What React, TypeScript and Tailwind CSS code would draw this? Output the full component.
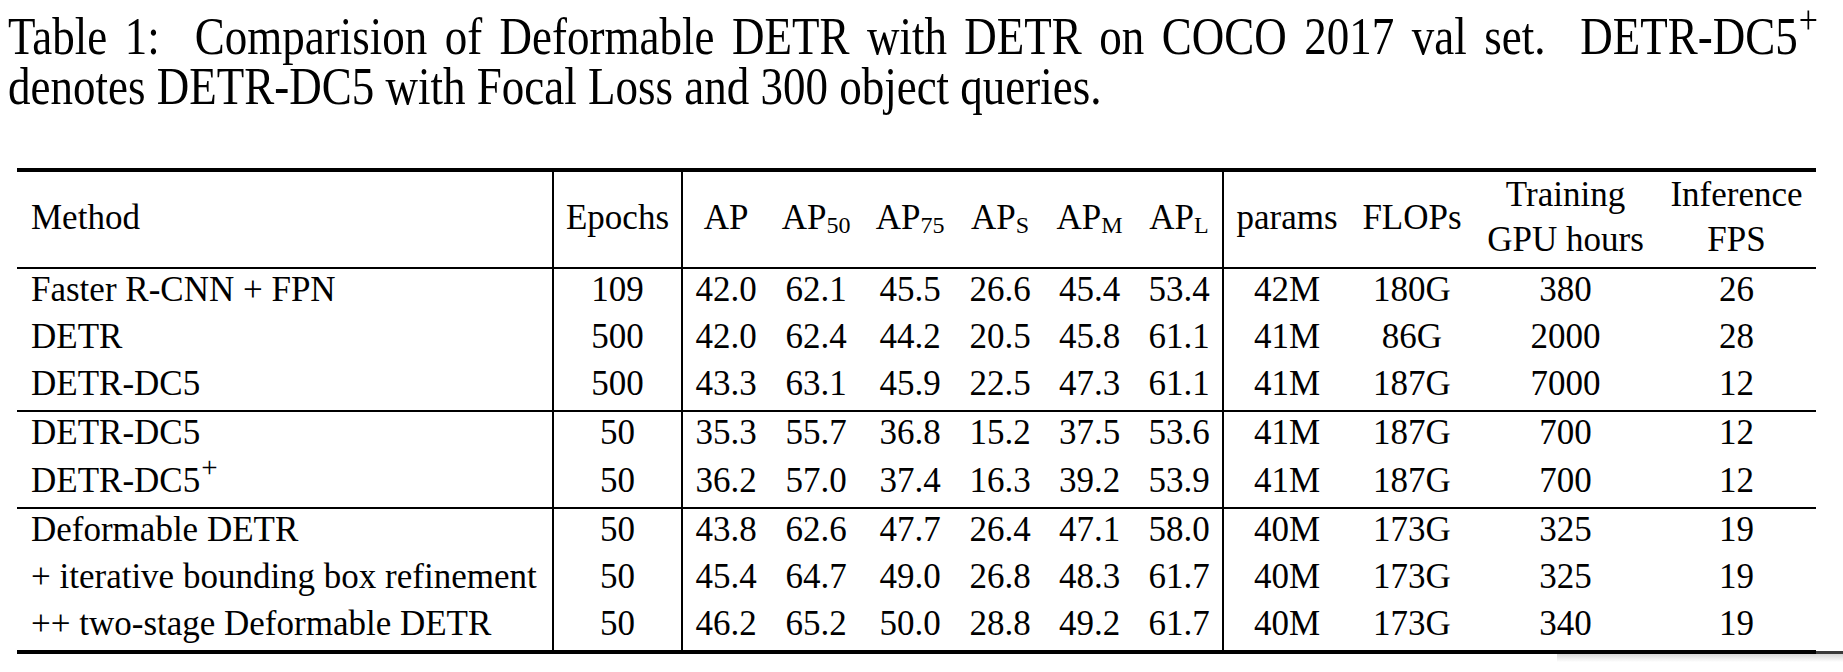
import React from 'react';

type Row = {
  method: React.ReactNode;
  epochs: string;
  ap: string[];
  rest: string[];
};

const groups: Row[][] = [
  [
    { method: 'Faster R-CNN + FPN', epochs: '109', ap: ['42.0', '62.1', '45.5', '26.6', '45.4', '53.4'], rest: ['42M', '180G', '380', '26'] },
    { method: 'DETR', epochs: '500', ap: ['42.0', '62.4', '44.2', '20.5', '45.8', '61.1'], rest: ['41M', '86G', '2000', '28'] },
    { method: 'DETR-DC5', epochs: '500', ap: ['43.3', '63.1', '45.9', '22.5', '47.3', '61.1'], rest: ['41M', '187G', '7000', '12'] },
  ],
  [
    { method: 'DETR-DC5', epochs: '50', ap: ['35.3', '55.7', '36.8', '15.2', '37.5', '53.6'], rest: ['41M', '187G', '700', '12'] },
    {
      method: (
        <>
          DETR-DC5<sup className="text-[29px] -top-[15px] ml-[1px]">+</sup>
        </>
      ),
      epochs: '50',
      ap: ['36.2', '57.0', '37.4', '16.3', '39.2', '53.9'],
      rest: ['41M', '187G', '700', '12'],
    },
  ],
  [
    { method: 'Deformable DETR', epochs: '50', ap: ['43.8', '62.6', '47.7', '26.4', '47.1', '58.0'], rest: ['40M', '173G', '325', '19'] },
    { method: '+ iterative bounding box refinement', epochs: '50', ap: ['45.4', '64.7', '49.0', '26.8', '48.3', '61.7'], rest: ['40M', '173G', '325', '19'] },
    { method: '++ two-stage Deformable DETR', epochs: '50', ap: ['46.2', '65.2', '50.0', '28.8', '49.2', '61.7'], rest: ['40M', '173G', '340', '19'] },
  ],
];

// row heights: content 47px (group 2 a touch taller), plus the rule below the last row of a group
const rowHeights = [
  ['h-[47px]', 'h-[47px]', 'h-[49px]'],
  ['h-[47.5px]', 'h-[49.5px]'],
  ['h-[47px]', 'h-[47px]', 'h-[51px]'],
];

function Sub({ children }: { children: React.ReactNode }) {
  return <sub className="text-[24px] -bottom-[4px]">{children}</sub>;
}

export default function App() {
  const head = 'border-t-4 border-b-2 border-black align-middle text-center leading-[45px] pb-[5px] font-normal';

  return (
    <div className="w-[1843px] h-[672px] overflow-hidden bg-white text-black font-['Liberation_Serif','Times_New_Roman',serif]">
      {/* Caption (the scan is a little stretched vertically) */}
      <div className="pt-[12px]">
        <p className="ml-[8px] w-[1810px] text-[45px] leading-[42px] text-justify origin-top scale-y-[1.18]">
          Table 1:&nbsp; Comparision of Deformable DETR with DETR on COCO 2017 val set.&nbsp; DETR-DC5
          <sup className="text-[34px] -top-[18px] ml-[1px]">+</sup> denotes DETR-DC5 with Focal Loss and 300 object queries.
        </p>
      </div>

      {/* Table */}
      <table className="mt-[72px] ml-[17px] w-[1799px] table-fixed border-separate border-spacing-0 text-[35px]">
        <colgroup>
          <col className="w-[537px]" />
          <col className="w-[129px]" />
          <col className="w-[86px]" />
          <col className="w-[94px]" />
          <col className="w-[94px]" />
          <col className="w-[86px]" />
          <col className="w-[93px]" />
          <col className="w-[88px]" />
          <col className="w-[126px]" />
          <col className="w-[124px]" />
          <col className="w-[183px]" />
          <col className="w-[159px]" />
        </colgroup>
        <thead>
          <tr className="h-[101px]">
            <th className={`${head} text-left pl-[14px] border-r-2`}>Method</th>
            <th className={`${head} border-r-2`}>Epochs</th>
            <th className={head}>AP</th>
            <th className={head}>
              AP<Sub>50</Sub>
            </th>
            <th className={head}>
              AP<Sub>75</Sub>
            </th>
            <th className={head}>
              AP<Sub>S</Sub>
            </th>
            <th className={head}>
              AP<Sub>M</Sub>
            </th>
            <th className={`${head} border-r-2`}>
              AP<Sub>L</Sub>
            </th>
            <th className={head}>params</th>
            <th className={head}>FLOPs</th>
            <th className={head}>
              Training
              <br />
              GPU hours
            </th>
            <th className={head}>
              Inference
              <br />
              FPS
            </th>
          </tr>
        </thead>
        <tbody>
          {groups.map((rows, g) =>
            rows.map((row, i) => {
              const last = i === rows.length - 1;
              const bottom = last ? (g === groups.length - 1 ? 'border-b-4' : 'border-b-2') : '';
              const cell = `${bottom} border-black align-middle text-center leading-[42px] pb-[5px] whitespace-nowrap`;
              return (
                <tr key={`${g}-${i}`} className={rowHeights[g][i]}>
                  <td className={`${cell} text-left pl-[14px] border-r-2`}>{row.method}</td>
                  <td className={`${cell} border-r-2`}>{row.epochs}</td>
                  {row.ap.map((v, k) => (
                    <td key={k} className={`${cell} ${k === 5 ? 'border-r-2' : ''}`}>
                      {v}
                    </td>
                  ))}
                  {row.rest.map((v, k) => (
                    <td key={k} className={cell}>
                      {v}
                    </td>
                  ))}
                </tr>
              );
            })
          )}
        </tbody>
      </table>

      {/* scan smear under the right end of the bottom rule */}
      <div className="-mt-[3px] ml-[1557px] w-[286px]">
        <div className="ml-[259px] h-[3px] bg-[#3a3a3a]" />
        <div className="h-[8px] bg-linear-to-b from-[#d6d6d6] to-white" />
      </div>
    </div>
  );
}
